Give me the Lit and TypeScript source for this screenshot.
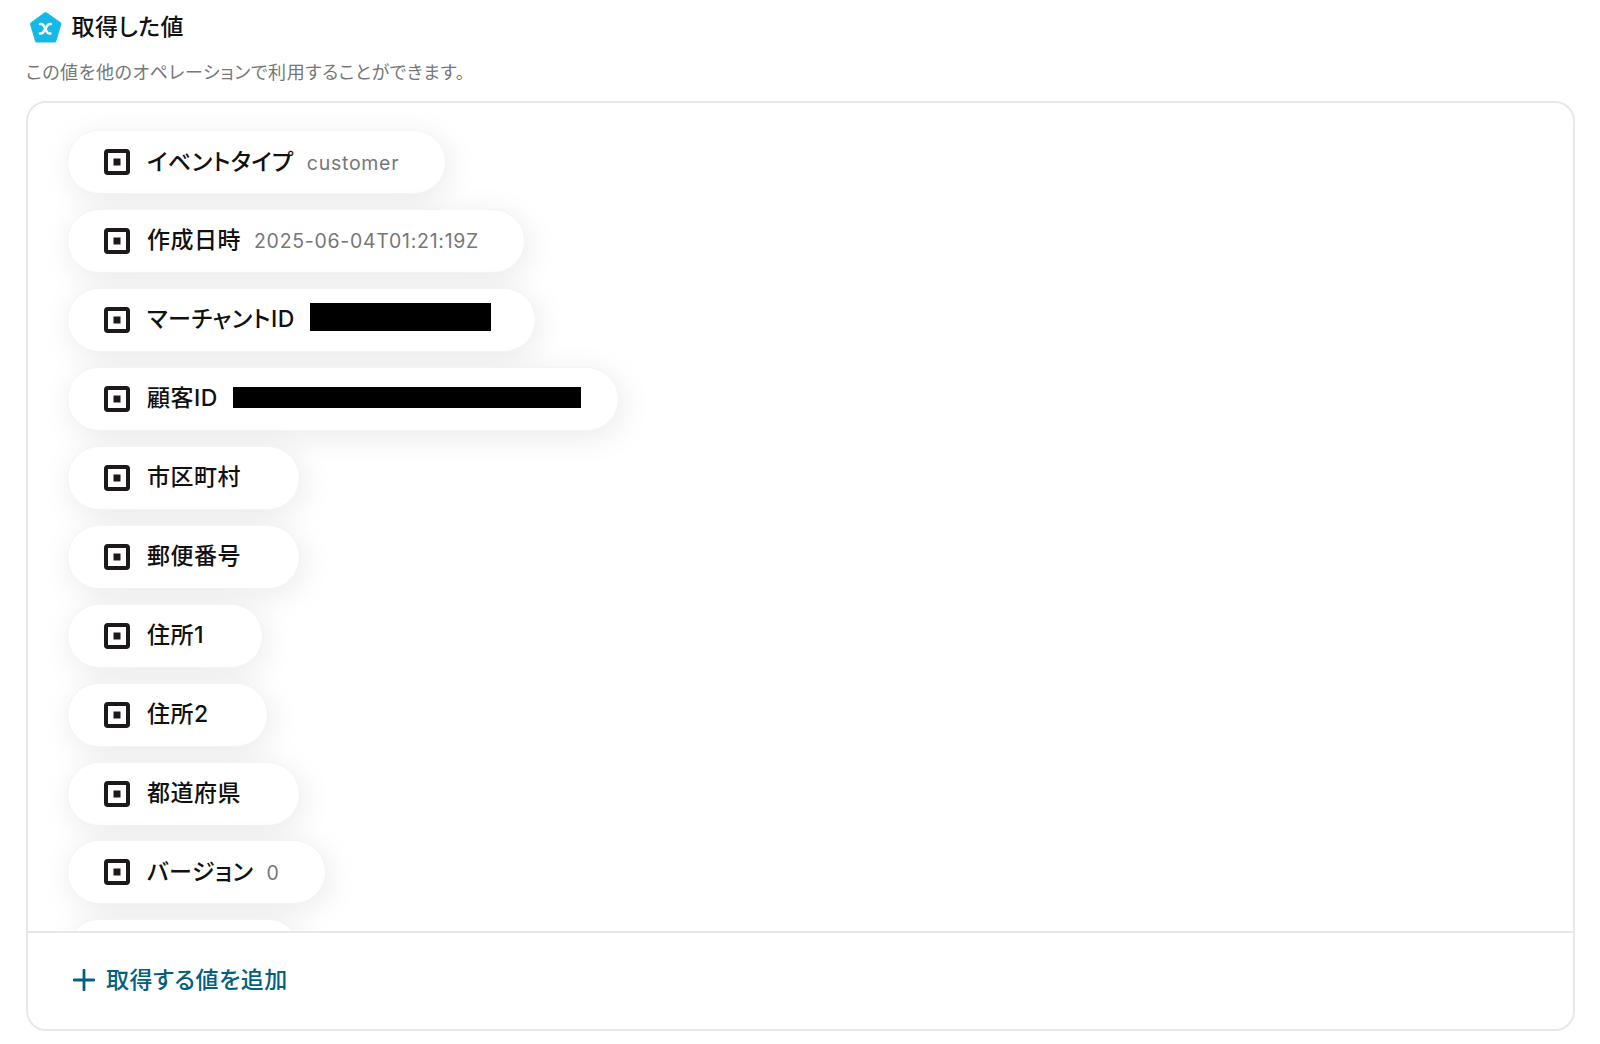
import { LitElement, html, css, nothing } from "lit";
import { customElement, property } from "lit/decorators.js";
import { styleMap } from "lit/directives/style-map.js";

interface Mask {
  width: number;
  height: number;
  lift: number;
}

interface Field {
  label: string;
  value?: string;
  mask?: Mask;
  width: number;
}

const FIELDS: Field[] = [
  { label: "イベントタイプ", value: "customer", width: 379 },
  { label: "作成日時", value: "2025-06-04T01:21:19Z", width: 458 },
  { label: "マーチャントID", mask: { width: 181, height: 28, lift: 6 }, width: 469 },
  { label: "顧客ID", mask: { width: 348, height: 21, lift: 2 }, width: 552 },
  { label: "市区町村", width: 233 },
  { label: "郵便番号", width: 233 },
  { label: "住所1", width: 196 },
  { label: "住所2", width: 201 },
  { label: "都道府県", width: 233 },
  { label: "バージョン", value: "0", width: 259 },
  { label: "", width: 233 },
];

@customElement("value-pill")
export class ValuePill extends LitElement {
  @property({ attribute: false }) field!: Field;

  static styles = css`
    :host {
      display: block;
      flex: none;
    }
    .pill {
      box-sizing: border-box;
      height: 64px;
      display: flex;
      align-items: center;
      padding-left: 36px;
      border: 1px solid #f4f4f4;
      border-radius: 32px;
      background: #fff;
      box-shadow: 3px 6px 32px rgba(0, 0, 0, 0.085);
      white-space: nowrap;
    }
    .icon {
      flex: none;
      width: 26px;
      height: 26px;
      margin-right: 17px;
    }
    .label {
      font-size: 23px;
      font-weight: 500;
      letter-spacing: 0.5px;
      color: #111;
      margin: 0 13px 1px 0;
      line-height: 32px;
    }
    .value {
      font-size: 19.5px;
      letter-spacing: 0.72px;
      color: #777;
      line-height: 32px;
      margin-top: 1px;
    }
    .mask {
      flex: none;
      margin-left: 2px;
      background: #000;
    }
  `;

  render() {
    const { label, value, mask, width } = this.field;
    return html`
      <div class="pill" style=${styleMap({ width: `${width}px` })}>
        <svg class="icon" viewBox="0 0 26 26">
          <rect x="2" y="2" width="22" height="22" rx="1.8" fill="none" stroke="#1d1919" stroke-width="4" />
          <rect x="9.5" y="9.5" width="7" height="7" fill="#1d1919" />
        </svg>
        <span class="label">${label}</span>
        ${value ? html`<span class="value">${value}</span>` : nothing}
        ${mask
          ? html`<span
              class="mask"
              style=${styleMap({
                width: `${mask.width}px`,
                height: `${mask.height}px`,
                marginBottom: `${mask.lift}px`,
              })}
            ></span>`
          : nothing}
      </div>
    `;
  }
}

@customElement("app-root")
export class AppRoot extends LitElement {
  static styles = css`
    :host {
      display: block;
      box-sizing: border-box;
      width: 1600px;
      height: 1044px;
      overflow: hidden;
      background: #fff;
      font-family: Inter, "Noto Sans CJK JP", sans-serif;
      font-feature-settings: "palt";
    }
    .page {
      display: flex;
      flex-direction: column;
      padding: 0 25px 0 26px;
    }
    .head {
      display: flex;
      align-items: center;
      height: 54px;
      padding-left: 3px;
    }
    .logo {
      width: 34px;
      height: 34px;
      margin-right: 8.5px;
    }
    .title {
      margin: 0;
      font-size: 23px;
      font-weight: 500;
      line-height: 34px;
      letter-spacing: 0.4px;
      color: #111;
    }
    .note {
      margin: 5px 0 0;
      height: 42px;
      font-size: 18px;
      line-height: 28px;
      letter-spacing: 0.6px;
      color: #777;
    }
    .card {
      box-sizing: border-box;
      height: 930px;
      display: flex;
      flex-direction: column;
      border: 2px solid #e8e8e8;
      border-radius: 20px;
      overflow: hidden;
    }
    .list {
      box-sizing: border-box;
      height: 828px;
      overflow: hidden;
      display: flex;
      flex-direction: column;
      align-items: flex-start;
      gap: 14.95px;
      padding: 27px 0 0 39px;
    }
    .foot {
      flex: 1;
      display: flex;
      align-items: center;
      padding: 0 0 2px 45px;
      border-top: 2px solid #e8e8e8;
    }
    .add {
      display: flex;
      align-items: center;
      gap: 11px;
      padding: 0;
      border: 0;
      background: none;
      font: 500 23px/34px Inter, "Noto Sans CJK JP", sans-serif;
      font-feature-settings: "palt";
      letter-spacing: 0.5px;
      color: #04607c;
    }
    .plus {
      width: 22px;
      height: 22px;
    }
  `;

  render() {
    return html`
      <main class="page">
        <header class="head">
          <svg class="logo" viewBox="0 0 34 34">
            <path
              d="M16.6 4.2 L30.4 14 L25.4 30.6 H8 L3 14 Z"
              fill="#14b9e8"
              stroke="#14b9e8"
              stroke-width="4"
              stroke-linejoin="round"
            />
            <path
              d="M11.2 14 H12.2 C13.4 14 14 14.5 14.6 15.5 L18 22 C18.6 23.1 19.2 23.6 20.4 23.6 H21.4 M21.8 14 H20.8 C19.6 14 19 14.5 18.4 15.5 L14.4 22 C13.8 23.1 13 23.6 12 23.6 H11"
              fill="none"
              stroke="#fff"
              stroke-width="2.5"
              stroke-linecap="round"
            />
          </svg>
          <h1 class="title">取得した値</h1>
        </header>
        <p class="note">この値を他のオペレーションで利用することができます。</p>
        <section class="card">
          <div class="list">
            ${FIELDS.map((field) => html`<value-pill .field=${field}></value-pill>`)}
          </div>
          <footer class="foot">
            <button class="add" type="button">
              <svg class="plus" viewBox="0 0 22 22">
                <path d="M11 1.2V20.8M1.2 11H20.8" stroke="#04607c" stroke-width="2.8" stroke-linecap="round" />
              </svg>
              <span>取得する値を追加</span>
            </button>
          </footer>
        </section>
      </main>
    `;
  }
}
